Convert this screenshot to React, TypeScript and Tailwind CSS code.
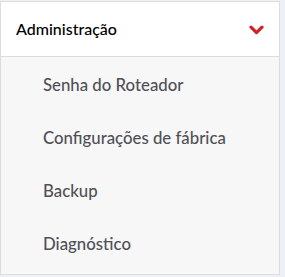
import React from "react"

const items = ["Senha do Roteador", "Configurações de fábrica", "Backup", "Diagnóstico"]

const App: React.FC = () => {
  return (
    <div className="w-[285px] h-[277px] bg-[#eef0f8] pr-[5px] pt-px" style={{ fontFamily: "Lato, 'Noto Sans', sans-serif" }}>
      <div className="border border-[#dcdcdf] bg-[#f7f7f8]">
        <div className="h-[55px] bg-white border-b border-[#dcdcdf] flex items-center justify-between pl-[15px] pr-[15px]">
          <span className="text-[16px] font-medium text-black">Administração</span>
          <svg width="15" height="10" viewBox="0 0 15 10" className="mt-px">
            <path d="M2 2.2 L7.5 7.6 L13 2.2" fill="none" stroke="#d42127" strokeWidth="3.2" strokeLinecap="round" strokeLinejoin="round" />
          </svg>
        </div>
        <ul className="pt-[1px] pb-[4px]">
          {items.map((it) => (
            <li key={it} className="h-[53px] flex items-center pl-[42px] text-[16.8px] font-medium text-[#505055]">
              {it}
            </li>
          ))}
        </ul>
      </div>
    </div>
  )
}

export default App
